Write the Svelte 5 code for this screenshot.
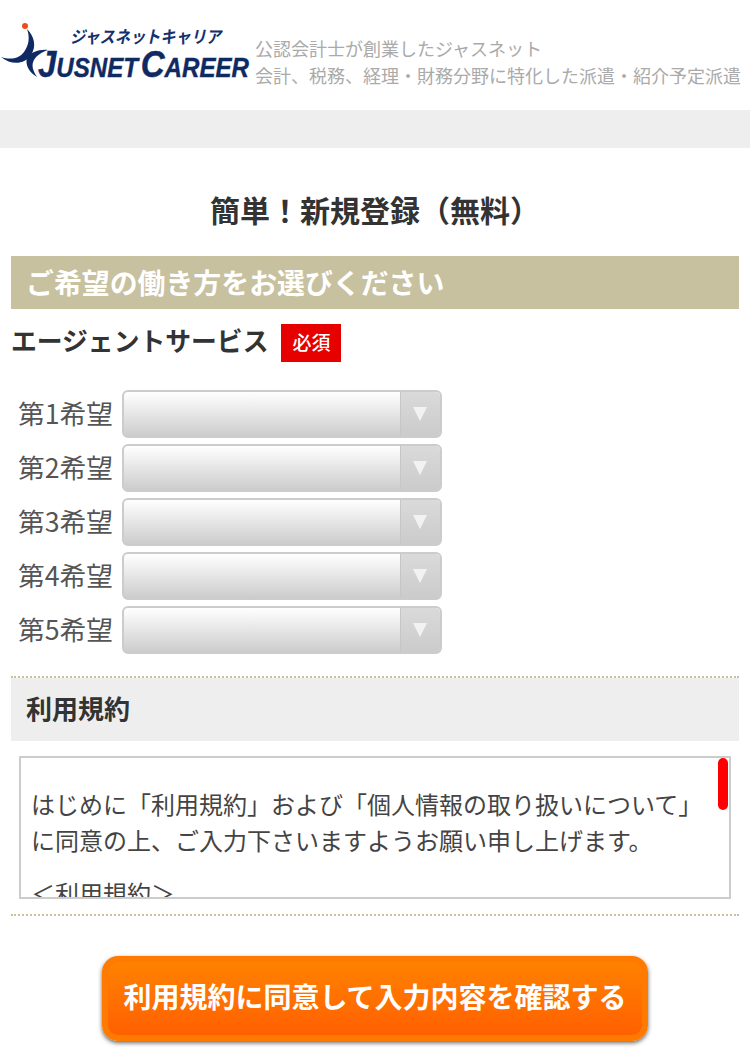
<script>
  const choices = ['第1希望', '第2希望', '第3希望', '第4希望', '第5希望'];
</script>

<div class="page">
  <header class="header">
    <svg class="logo" viewBox="0 0 250 84" width="250" height="84" aria-label="ジャスネットキャリア JUSNET CAREER">
      <path class="swoosh" d="M27 29 C34 36 37 46 31 55 C25 64 12 66 1 57 C10 60 19 59 24 52 C29 45 30 37 27 29 Z" />
      <path class="swoosh" d="M48 50 C40 49 30 52 27 58 C25 65 29 72 37 77 C33 71 31 65 34 60 C37 55 42 52 48 50 Z" />
      <circle class="dot" cx="25" cy="26" r="3" />
      <text class="kana" x="70" y="43" textLength="151" lengthAdjust="spacingAndGlyphs">ジャスネットキャリア</text>
      <text class="brand" x="38" y="77" textLength="211" lengthAdjust="spacingAndGlyphs"><tspan class="big">J</tspan>USNET<tspan class="big" dx="3">C</tspan>AREER</text>
    </svg>
    <p class="tagline">公認会計士が創業したジャスネット<br />会計、税務、経理・財務分野に特化した派遣・紹介予定派遣</p>
  </header>
  <div class="band"></div>

  <main class="main">
    <h1 class="title">簡単！新規登録（無料）</h1>
    <h2 class="section">ご希望の働き方をお選びください</h2>
    <div class="agent">
      <span class="agent-label">エージェントサービス</span>
      <span class="badge">必須</span>
    </div>

    <div class="choices">
      {#each choices as c}
        <div class="choice">
          <span class="choice-label">{c}</span>
          <div class="select">
            <div class="arrow"><span class="tri"></span></div>
          </div>
        </div>
      {/each}
    </div>

    <section class="terms">
      <h3 class="terms-title">利用規約</h3>
      <div class="terms-box">
        <p>はじめに「利用規約」および「個人情報の取り扱いについて」に同意の上、ご入力下さいますようお願い申し上げます。</p>
        <p class="next">＜利用規約＞</p>
        <span class="thumb"></span>
      </div>
    </section>

    <div class="actions">
      <button class="submit" type="button">利用規約に同意して入力内容を確認する</button>
    </div>
  </main>
</div>

<style>
  :global(body) {
    margin: 0;
    background: #fff;
  }
  .page {
    width: 750px;
    height: 1057px;
    overflow: hidden;
    font-family: "Noto Sans CJK JP", "Noto Sans", sans-serif;
    color: #333;
  }
  .header {
    height: 110px;
    display: flex;
    align-items: flex-start;
    gap: 5px;
  }
  .logo {
    flex: none;
  }
  .swoosh { fill: #0f2a63; }
  .dot { fill: #f04a18; }
  .kana {
    font-size: 17px;
    font-weight: 700;
    font-style: italic;
    fill: #15306c;
  }
  .brand {
    font-family: "Liberation Sans", sans-serif;
    font-size: 27px;
    font-weight: 700;
    font-style: italic;
    fill: #0f2a63;
    stroke: #0f2a63;
    stroke-width: 0.4;
  }
  .big { font-size: 37px; }
  .tagline {
    margin: 35px 0 0;
    font-size: 18px;
    line-height: 27px;
    color: #aaa;
    white-space: nowrap;
  }
  .band {
    height: 38px;
    background: #eee;
  }
  .main {
    padding: 0 11px;
  }
  .title {
    margin: 41px 0 27px;
    height: 40px;
    text-align: center;
    font-size: 30px;
    line-height: 40px;
    font-weight: 700;
    color: #333;
  }
  .section {
    margin: 0;
    height: 53px;
    box-sizing: border-box;
    padding: 0 0 1px 15px;
    background: #c7c19f;
    color: #fff;
    font-size: 27.9px;
    line-height: 52px;
    font-weight: 700;
  }
  .agent {
    display: flex;
    align-items: center;
    gap: 13px;
    height: 38px;
    margin-top: 15px;
  }
  .agent-label {
    font-size: 25.8px;
    font-weight: 700;
    line-height: 34px;
    padding-bottom: 6px;
    white-space: nowrap;
  }
  .badge {
    width: 60px;
    height: 38px;
    box-sizing: border-box;
    padding-bottom: 2px;
    background: #e60000;
    color: #fff;
    font-size: 19px;
    font-weight: 500;
    line-height: 36px;
    text-align: center;
  }
  .choices {
    display: flex;
    flex-direction: column;
    gap: 6px;
    margin-top: 28px;
    padding-left: 8px;
  }
  .choice {
    display: flex;
    align-items: center;
    gap: 8px;
    height: 48px;
  }
  .choice-label {
    width: 95px;
    box-sizing: border-box;
    padding-bottom: 2px;
    margin-left: -1px;
    margin-right: 1px;
    font-size: 26.7px;
    line-height: 46px;
    color: #555;
    white-space: nowrap;
  }
  .select {
    width: 320px;
    height: 48px;
    box-sizing: border-box;
    border: 2px solid #ccc;
    border-radius: 6px;
    background: linear-gradient(#fff, #ccc);
    display: flex;
    justify-content: flex-end;
    overflow: hidden;
  }
  .arrow {
    width: 40px;
    box-sizing: border-box;
    padding-right: 2px;
    border-left: 1px solid #c6c6c6;
    display: flex;
    align-items: center;
    justify-content: center;
    background: linear-gradient(#dadada, #cbcbcb);
  }
  .tri {
    width: 0;
    height: 0;
    border-left: 7px solid transparent;
    border-right: 7px solid transparent;
    border-top: 14px solid #f2f2f2;
  }
  .terms {
    margin-top: 22px;
    border-top: 2px dotted #c7c19f;
    border-bottom: 2px dotted #c7c19f;
    padding-bottom: 15px;
  }
  .terms-title {
    margin: 0;
    height: 63px;
    box-sizing: border-box;
    padding: 0 0 4px 15px;
    background: #eee;
    font-size: 26px;
    line-height: 59px;
    font-weight: 700;
    color: #333;
  }
  .terms-box {
    position: relative;
    height: 143px;
    box-sizing: border-box;
    margin: 15px 8px 0;
    border: 2px solid #ccc;
    padding: 28px 30px 0 10px;
    overflow: hidden;
    font-size: 24px;
    line-height: 36px;
    color: #444;
  }
  .terms-box p {
    margin: 0;
  }
  .terms-box .next {
    margin-top: 17px;
  }
  .thumb {
    position: absolute;
    top: 0;
    right: 1px;
    width: 10px;
    height: 52px;
    border-radius: 5px;
    background: #f00;
  }
  .actions {
    display: flex;
    justify-content: center;
    margin-top: 40px;
  }
  .submit {
    width: 546px;
    height: 85px;
    box-sizing: border-box;
    border: 6px solid #ff7a00;
    border-radius: 16px;
    background: linear-gradient(#ff8200, #ff6000);
    box-shadow: 0 2px 4px rgba(40, 40, 40, 0.7);
    color: #fff;
    font-family: inherit;
    font-size: 28px;
    font-weight: 700;
    padding: 0 0 5px;
    white-space: nowrap;
  }
</style>
